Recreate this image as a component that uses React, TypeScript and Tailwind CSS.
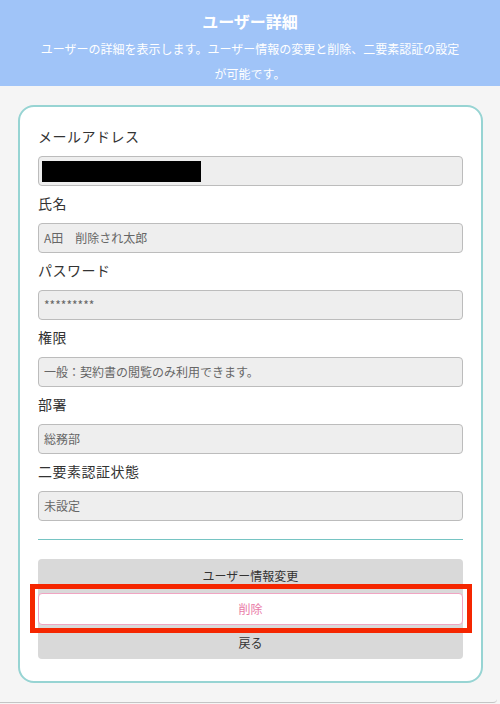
const jp = { fontFamily: '"Noto Sans CJK JP", "Noto Sans", sans-serif' };

const fields = [
  { label: 'メールアドレス', value: '', masked: true },
  { label: '氏名', value: 'A田　削除され太郎' },
  { label: 'パスワード', value: '*********' },
  { label: '権限', value: '一般：契約書の閲覧のみ利用できます。' },
  { label: '部署', value: '総務部' },
  { label: '二要素認証状態', value: '未設定' },
];

function Field({ label, value, masked }: { label: string; value: string; masked?: boolean }) {
  return (
    <div className="mb-[7px]">
      <div className="h-[20px] mb-[10px] text-[14px] leading-[20px] text-[#333] tracking-[0.5px]">{label}</div>
      <div className="h-[30px] rounded-[4px] border border-[#bcbcbc] bg-[#eeeeee] px-[5px] flex items-center text-[12px] text-[#666]">
        {masked ? <div className="w-[159px] h-[21px] bg-black -ml-[2px]" /> : value}
      </div>
    </div>
  );
}

export default function App() {
  return (
    <div style={jp} className="w-[500px] h-[704px] bg-[#f5f5f5]">
      <div className="w-[497px] h-[703px] bg-[#f5f5f5] border-b border-[#c4c4c4] rounded-br-[4px]">
        <header className="w-[500px] h-[86px] bg-[#a0c4f8] text-white text-center px-[36px] pt-[8px]">
          <h1 className="text-[16px] font-bold leading-[26px]">ユーザー詳細</h1>
          <p className="text-[12px] leading-[25px] mt-[2px]">
            ユーザーの詳細を表示します。ユーザー情報の変更と削除、二要素認証の設定が可能です。
          </p>
        </header>

        <div className="pt-[19px] px-[18px]">
          <div className="w-[465px] bg-white rounded-[16px] border-2 border-[#97d4d3] pt-[19px] pb-[22px] px-[18px]">
            {fields.map((f) => (
              <Field key={f.label} label={f.label} value={f.value} masked={f.masked} />
            ))}

            <div className="mt-[18px] mb-[19px] h-px bg-[#76c4c3]" />

            <div className="flex flex-col">
              <button className="h-[33px] rounded-t-[4px] bg-[#d9d9d9] text-[12px] text-[#333]">
                ユーザー情報変更
              </button>
              <div className="relative bg-[#d9d9d9] py-[1px]">
                <button className="w-full h-[32px] rounded-[4px] bg-white border border-[#f0a5c3] text-[12px] text-[#e97aa6]">
                  削除
                </button>
                <div className="absolute -left-[8px] -right-[9px] -top-[8px] -bottom-[7px] border-[5px] border-[#f52600]" />
              </div>
              <button className="h-[33px] rounded-b-[4px] bg-[#d9d9d9] text-[12px] text-[#333]">
                戻る
              </button>
            </div>
          </div>
        </div>
      </div>
    </div>
  );
}
